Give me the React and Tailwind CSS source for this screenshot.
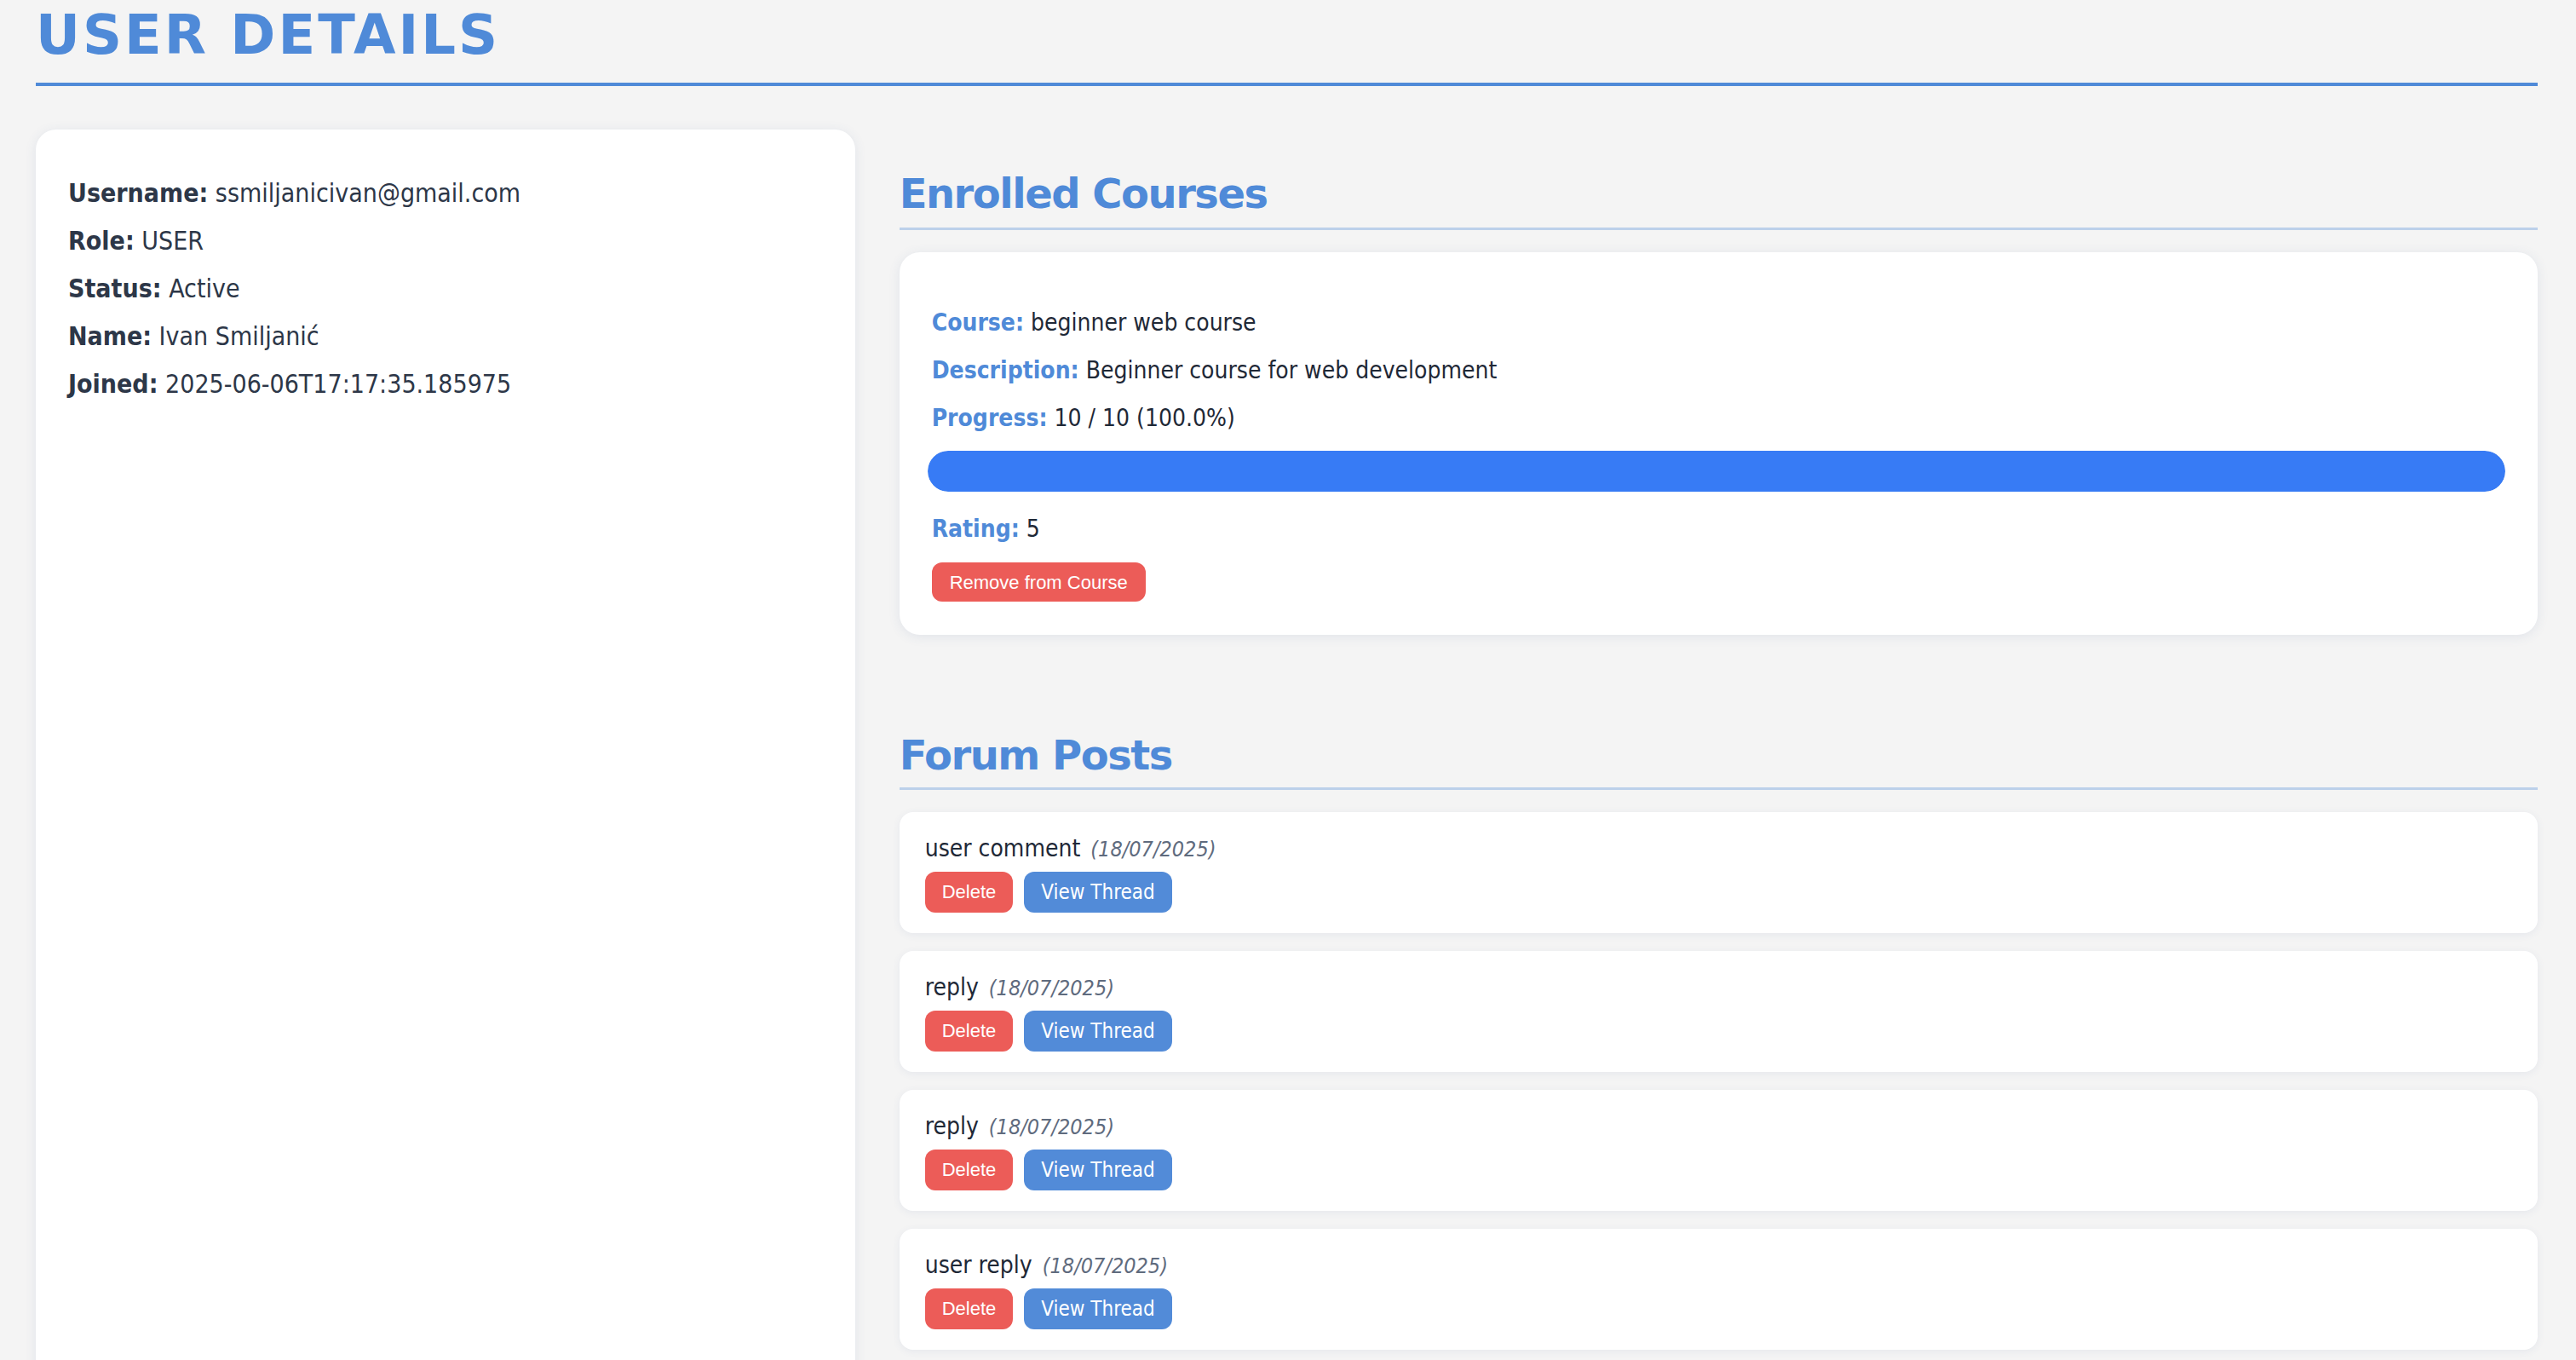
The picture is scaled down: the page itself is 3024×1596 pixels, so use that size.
const posts = [
    { text: "user comment", date: "18/07/2025" },
    { text: "reply", date: "18/07/2025" },
    { text: "reply", date: "18/07/2025" },
    { text: "user reply", date: "18/07/2025" },
];

const details = [
    ["Username:", "ssmiljanicivan@gmail.com"],
    ["Role:", "USER"],
    ["Status:", "Active"],
    ["Name:", "Ivan Smiljanić"],
    ["Joined:", "2025-06-06T17:17:35.185975"],
];

function CourseRow({ label, children }) {
    return (
        <p className="text-[28px] leading-[56px] text-[#1f2937]">
            <span className="font-bold text-[#4f8ad8]">{label}</span> {children}
        </p>
    );
}

export default function App() {
    return (
        <div className="min-h-screen bg-[#f4f4f4] pl-[42px] pr-[45px] pb-[40px] font-['DejaVu_Sans_Condensed','DejaVu_Sans',sans-serif]">
            <h1 className="pt-[3px] pb-[17px] border-b-4 border-[#4f8ad8] text-[64px] leading-[1.2] font-bold tracking-[3px] text-[#4f8ad8] font-['DejaVu_Sans',sans-serif]">
                USER DETAILS
            </h1>

            <div className="mt-[51px] grid grid-cols-[1fr_2fr] gap-[52px]">
                <div className="bg-white rounded-[24px] shadow-[0_2px_14px_rgba(60,90,150,0.10)] px-[38px] pt-[47px]">
                    {details.map(([label, value]) => (
                        <p key={label} className="text-[30px] leading-[56px] text-[#2d3748]">
                            <span className="font-bold">{label}</span> {value}
                        </p>
                    ))}
                </div>

                <div className="pb-[60px]">
                    <h2 className="mt-[47px] pb-[11px] border-b-[3px] border-[#bcd0ea] text-[48px] leading-[1.2] font-bold tracking-[-1.5px] text-[#4f8ad8] font-['DejaVu_Sans',sans-serif]">
                        Enrolled Courses
                    </h2>
                    <div className="mt-[26px] bg-white rounded-[24px] shadow-[0_2px_14px_rgba(60,90,150,0.10)] px-[38px] pt-[55px] pb-[39px]">
                        <CourseRow label="Course:">beginner web course</CourseRow>
                        <CourseRow label="Description:">Beginner course for web development</CourseRow>
                        <CourseRow label="Progress:">10 / 10 (100.0%)</CourseRow>
                        <div className="mt-[10px] ml-[-5px] h-[48px] rounded-full bg-[#e5e7eb] overflow-hidden">
                            <div className="h-full rounded-full bg-[#377bf5]" style={{ width: "100%" }} />
                        </div>
                        <div className="mt-[16px]">
                            <CourseRow label="Rating:">5</CourseRow>
                        </div>
                        <button className="mt-[11px] h-[46px] px-[21px] rounded-[12px] bg-[#ec5c58] text-white text-[22px] font-['Liberation_Sans',Arial,sans-serif]">
                            Remove from Course
                        </button>
                    </div>

                    <h2 className="mt-[113px] pb-[8px] border-b-[3px] border-[#bcd0ea] text-[48px] leading-[1.2] font-bold tracking-[-1.5px] text-[#4f8ad8] font-['DejaVu_Sans',sans-serif]">
                        Forum Posts
                    </h2>
                    <div className="mt-[26px] flex flex-col gap-[21px]">
                        {posts.map((post, i) => (
                            <div key={i} className="bg-white rounded-[16px] shadow-[0_2px_10px_rgba(60,90,150,0.08)] px-[30px] pt-[26px] pb-[24px]">
                                <p className="h-[34px] text-[28px] leading-[34px] text-[#1f2937]">
                                    {post.text}{" "}
                                    <span className="ml-[4px] text-[25px] leading-none italic text-[#5f6b7e]">({post.date})</span>
                                </p>
                                <div className="mt-[10px] flex gap-[13px]">
                                    <button className="h-[48px] px-[20px] rounded-[12px] bg-[#ec5c58] text-white text-[22px] font-['Liberation_Sans',Arial,sans-serif]">
                                        Delete
                                    </button>
                                    <button className="h-[48px] px-[20px] rounded-[12px] bg-[#528bd8] text-white text-[24px]">
                                        View Thread
                                    </button>
                                </div>
                            </div>
                        ))}
                    </div>
                </div>
            </div>
        </div>
    );
}
